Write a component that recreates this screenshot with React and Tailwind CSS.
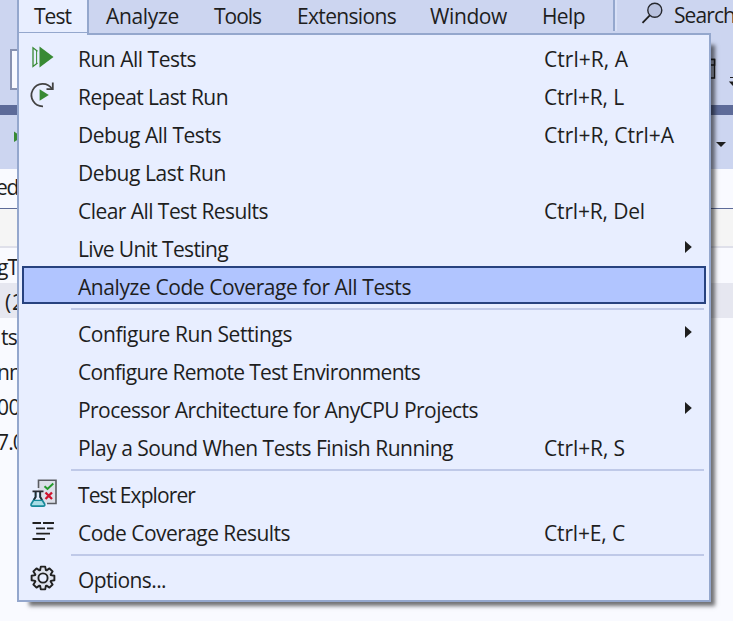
import React, { useLayoutEffect, useRef, useState } from "react";

// Spreads a label over a fixed advance width by adjusting its tracking.
function Label({ text, width }) {
  const ref = useRef(null);
  const [spacing, setSpacing] = useState(0);
  useLayoutEffect(() => {
    const natural = ref.current.getBoundingClientRect().width;
    setSpacing((width - natural) / text.length);
  }, [text, width]);
  return (
    <span ref={ref} className="inline-block whitespace-nowrap" style={{ letterSpacing: spacing }}>
      {text}
    </span>
  );
}

const RunAllIcon = () => (
  <svg className="block" width="30" height="30" viewBox="0 0 30 30">
    <path d="M9.5 9.2L5 5.8V24.5L9.5 21" fill="none" stroke="#388a34" strokeWidth="1.3" />
    <path d="M8.6 8.5V22" stroke="#388a34" strokeWidth="1" />
    <path d="M11.5 4.5V25.5L25.5 15z" fill="#388a34" />
  </svg>
);

const RepeatIcon = () => (
  <svg className="block" width="30" height="30" viewBox="0 0 30 30">
    <path d="M15 26.3A11.2 11.2 0 1 1 24.2 9.2" fill="none" stroke="#424242" strokeWidth="1.7" />
    <path d="M24.8 2.5V9.2H18.5" fill="none" stroke="#424242" strokeWidth="1.8" />
    <path d="M11.6 9.2V20.8L20.8 15z" fill="#388a34" />
  </svg>
);

const ExplorerIcon = () => (
  <svg className="block" width="30" height="30" viewBox="0 0 30 30">
    <path d="M10 2.3H28V25.5H16L10 12z" fill="#dcdfe9" />
    <path d="M10.5 10V2.3H28V25.5H19" fill="none" stroke="#5a5c62" strokeWidth="1.6" />
    <path d="M16.5 8.2L19.5 11L25.3 5.6" fill="none" stroke="#259a2c" strokeWidth="2" />
    <path d="M17.5 14.5L24 21M24 14.5L17.5 21" stroke="#d0122d" strokeWidth="2.3" />
    <path d="M5.6 22.5H14.2L16.4 26.2Q17 28 15.2 28H4.6Q2.8 28 3.4 26.2z" fill="#a9dde6" />
    <path d="M7.6 13.5V19L3.2 26Q2.4 28.1 4.6 28.1H15.2Q17.4 28.1 16.6 26L12.2 19V13.5" fill="none" stroke="#16899a" strokeWidth="1.7" />
    <path d="M4.5 13.3H15.5M7.6 13V19L5.8 22M12.2 13V19L14 22" fill="none" stroke="#292b31" strokeWidth="1.8" />
    <path d="M5.5 22.4H14.3" stroke="#16899a" strokeWidth="1.3" />
  </svg>
);

const CoverageIcon = () => (
  <svg className="block" width="30" height="30" viewBox="0 0 30 30">
    <path
      d="M4.5 7H13M15 7H26M8 12.4H17M19 12.4H25.5M8.2 17.6H22M4.5 23H17"
      fill="none"
      stroke="#212121"
      strokeWidth="1.8"
    />
  </svg>
);

const teeth = [0, 45, 90, 135, 180, 225, 270, 315];

const gearPath =
  teeth
    .map((deg) =>
      [
        [-20, 8.4],
        [-11, 11.6],
        [11, 11.6],
        [20, 8.4],
      ]
        .map(([offset, r]) => {
          const a = ((deg + offset) * Math.PI) / 180;
          return `${(15 + r * Math.sin(a)).toFixed(2)} ${(15 - r * Math.cos(a)).toFixed(2)}`;
        })
        .join("L")
    )
    .map((p, i) => (i ? "L" : "M") + p)
    .join("") + "z";

const GearIcon = () => (
  <svg className="block" width="30" height="30" viewBox="0 0 30 30">
    <path d={gearPath} fill="#dfe3ee" stroke="#212121" strokeWidth="1.9" strokeLinejoin="round" />
    <circle cx="15" cy="15" r="4.6" fill="#e8eeff" stroke="#212121" strokeWidth="1.9" />
  </svg>
);

const groups = [
  [
    { label: "Run All Tests", width: 118, keys: "Ctrl+R, A", keysWidth: 84, icon: <RunAllIcon /> },
    { label: "Repeat Last Run", width: 150, keys: "Ctrl+R, L", keysWidth: 80, icon: <RepeatIcon /> },
    { label: "Debug All Tests", width: 143, keys: "Ctrl+R, Ctrl+A", keysWidth: 130 },
    { label: "Debug Last Run", width: 148 },
    { label: "Clear All Test Results", width: 190, keys: "Ctrl+R, Del", keysWidth: 101 },
    { label: "Live Unit Testing", width: 150, sub: true },
    { label: "Analyze Code Coverage for All Tests", width: 333, active: true },
  ],
  [
    { label: "Configure Run Settings", width: 214, sub: true },
    { label: "Configure Remote Test Environments", width: 342 },
    { label: "Processor Architecture for AnyCPU Projects", width: 400, sub: true },
    { label: "Play a Sound When Tests Finish Running", width: 375, keys: "Ctrl+R, S", keysWidth: 81 },
  ],
  [
    { label: "Test Explorer", width: 117, icon: <ExplorerIcon /> },
    { label: "Code Coverage Results", width: 212, keys: "Ctrl+E, C", keysWidth: 81, icon: <CoverageIcon /> },
  ],
  [{ label: "Options...", width: 88, icon: <GearIcon /> }],
];

function Row({ item }) {
  return (
    <div
      className={
        "mx-[3px] flex h-[38px] items-center border-2 " +
        (item.active ? "border-[#27427f] bg-[#b1c5ff]" : "border-transparent")
      }
    >
      <div className="ml-1 w-[50px] shrink-0">{item.icon}</div>
      <div className="w-[466px] shrink-0 pt-1">
        <Label text={item.label} width={item.width} />
      </div>
      <div className="w-[140px] shrink-0 pt-1">
        {item.keys && <Label text={item.keys} width={item.keysWidth} />}
      </div>
      {item.sub && (
        <svg className="mb-px block shrink-0" width="8" height="12" viewBox="0 0 8 12">
          <path d="M1 0L7.8 6L1 12z" fill="#1e1e1e" />
        </svg>
      )}
    </div>
  );
}

const menuBar = [
  { label: "Analyze", width: 73, box: "w-[108px]" },
  { label: "Tools", width: 47, box: "w-[83px]" },
  { label: "Extensions", width: 99, box: "w-[133px]" },
  { label: "Window", width: 77, box: "w-[112px]" },
  { label: "Help", width: 43, box: "w-[72px]" },
];

const treeRows = ["gT", "(2", "ts", "nn", "00", "7.0"];
const treeWidths = [21, 20, 16, 24, 23, 27];
const treePads = ["-ml-[3px]", "ml-[5px]", "ml-px", "-ml-[3px]", "-ml-[3px]", "-ml-[3px]"];

export default function App() {
  return (
    <div className="relative flex h-[621px] w-[733px] flex-col overflow-hidden bg-[#f9faff] font-['Open_Sans','Noto_Sans',sans-serif] text-[21px] leading-[30px] text-[#1e1e1e]">
      <div className="flex h-[35px] shrink-0 bg-[#ccd5f0]">
        <div className="z-20 ml-[17px] h-[33px] w-[72px] shrink-0 border-x-2 border-b border-[#94a7cd] bg-[#e8eeff] pl-[15px] pt-px">
          <Label text="Test" width={37} />
        </div>
        <div className="flex pl-[17px] pt-px">
          {menuBar.map((m) => (
            <div key={m.label} className={"shrink-0 " + m.box}>
              <Label text={m.label} width={m.width} />
            </div>
          ))}
        </div>
        <div className="-ml-px h-[31px] w-1 shrink-0 border-l-2 border-r-2 border-l-[#94a7cd] border-r-[#d8e0f6]" />
        <svg className="ml-[24px] block shrink-0" width="24" height="26" viewBox="0 0 24 26">
          <circle cx="13.8" cy="10.2" r="7" fill="#b9c2df" stroke="#26282e" strokeWidth="1.4" />
          <path d="M8.8 15.3L1.5 22.8" stroke="#1e1e1e" strokeWidth="1.8" />
        </svg>
        <div className="ml-[9px]">
          <Label text="Search" width={61} />
        </div>
      </div>
      <div className="flex h-[70px] shrink-0 justify-between bg-[#ccd5f0] pt-[14px]">
        <div className="ml-[10px] h-[41px] w-[20px] border-2 border-[#8791b0] bg-[#f8f9ff]" />
        <svg className="mt-[8px] block" width="30" height="34" viewBox="0 0 30 34">
          <path d="M2 2.5H11.5V21H2z" fill="#b2b9cf" stroke="#1e1e1e" strokeWidth="1.4" />
          <path d="M2 2.5H11.5V8H2z" fill="#b2b9cf" stroke="#1e1e1e" strokeWidth="1.6" />
          <path d="M27 20.5H30M27.2 25H32L30 28z" fill="#1e1e1e" stroke="#1e1e1e" strokeWidth="1.2" />
        </svg>
      </div>
      <div className="h-[10px] shrink-0 bg-[#5d6b99]" />
      <div className="flex h-[54px] shrink-0 justify-between bg-[#ccd5f0]">
        <svg className="ml-[13px] mt-[16px] block" width="10" height="12" viewBox="0 0 10 12">
          <path d="M1 0.5V11L9 6z" fill="#388a34" />
        </svg>
        <svg className="mr-[7px] mt-[27px] block" width="10" height="6" viewBox="0 0 10 6">
          <path d="M0 0H10L5 5z" fill="#1e1e1e" />
        </svg>
      </div>
      <div className="h-[40px] shrink-0 border-b border-[#5d6b99] pt-[3px]">
        <div className="-ml-[4px]">
          <Label text="ed" width={22} />
        </div>
      </div>
      <div className="h-[39px] shrink-0 border-b-2 border-[#dfe0ea] bg-[#f5f5f5]" />
      {treeRows.map((t, i) => (
        <div key={t} className={"h-[35px] shrink-0 pt-[4px] " + (i === 1 ? "bg-[#e6e7f0]" : "")}>
          <div className={treePads[i]}>
            <Label text={t} width={treeWidths[i]} />
          </div>
        </div>
      ))}
      <div className="absolute left-[17px] top-[33px] z-10 h-[569px] w-[694px] border-2 border-[#94a7cd] bg-[#e8eeff] pt-[3px] shadow-[8px_8px_4px_-4px_rgba(0,0,0,0.55)]">
        {groups.map((items, g) => (
          <React.Fragment key={g}>
            {g > 0 && <div className="mb-[3px] ml-[52px] mr-[5px] mt-1 h-[2px] bg-[#bfc9e8]" />}
            {items.map((item) => (
              <Row key={item.label} item={item} />
            ))}
          </React.Fragment>
        ))}
      </div>
      <div className="absolute left-[19px] top-[33px] z-20 h-[2px] w-[68px] bg-[#e8eeff]" />
    </div>
  );
}
